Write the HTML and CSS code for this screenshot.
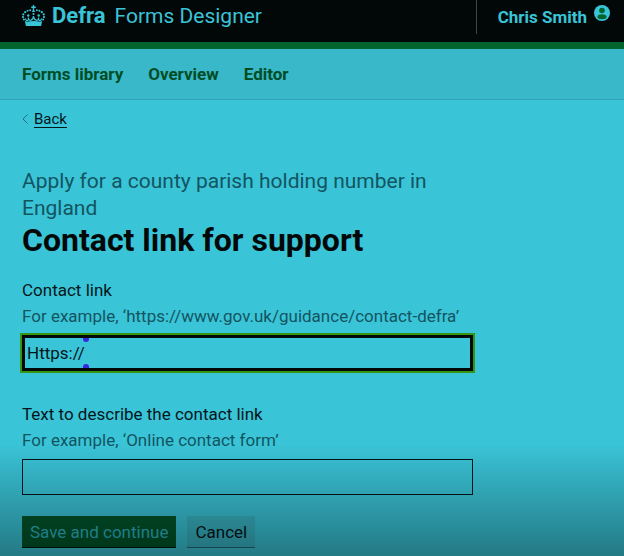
FILE: index.html
```html
<!DOCTYPE html>
<html lang="en">
<head>
<meta charset="utf-8">
<meta name="viewport" content="width=device-width, initial-scale=1">
<title>Contact link for support - Defra Forms Designer</title>
<link rel="stylesheet" href="styles.css">
</head>
<body>
<header class="header">
  <a class="brand" href="#">
    <svg class="crown" viewBox="0 0 23 24" aria-hidden="true">
      <path d="M10.800 3h1.400v1.600h1.600v1.500h-1.600v2.200l1 1.700h-3.400l1-1.700V6.100H9.200V4.600h1.600z"/>
      <circle cx="8.200" cy="8.300" r="1"/><circle cx="5.600" cy="8.800" r="1"/><circle cx="3.200" cy="10.200" r="1.100"/><circle cx="1.300" cy="12.400" r="1.100"/><circle cx="1" cy="15" r="1.100"/><circle cx="1.900" cy="17.400" r="1"/>
      <circle cx="14.800" cy="8.300" r="1"/><circle cx="17.400" cy="8.800" r="1"/><circle cx="19.800" cy="10.200" r="1.100"/><circle cx="21.700" cy="12.400" r="1.100"/><circle cx="22" cy="15" r="1.100"/><circle cx="21.100" cy="17.400" r="1"/>
      <circle cx="11.500" cy="12" r="1.100"/><circle cx="6.300" cy="13.500" r="1.200"/><circle cx="16.700" cy="13.500" r="1.200"/>
      <path class="crown-line" d="M3.300 16.500l1.300 2.200c1.600.2 2-1 1.700-3.200.3 2 1.200 3.200 2.700 2.700 1.400-.4 2.300-1.700 2.500-4.200.2 2.500 1.100 3.800 2.500 4.200 1.500.5 2.400-.7 2.700-2.700-.3 2.200.1 3.400 1.700 3.200l1.300-2.200"/>
      <path d="M2.800 18.800l1.800.9c4.600-.9 9.200-.9 13.800 0l1.800-.9-1.100 5.200H3.900z"/>
    </svg>
    <strong class="brand-org">Defra</strong>
    <span class="brand-product">Forms Designer</span>
  </a>
  <a class="account" href="#">
    <span>Chris Smith</span>
    <svg class="avatar" viewBox="0 0 16 16" aria-hidden="true">
      <circle class="avatar-disc" cx="8" cy="8" r="8"/>
      <circle class="avatar-person" cx="8" cy="5.500" r="2.800"/>
      <ellipse class="avatar-person" cx="8" cy="11.800" rx="4.600" ry="2.500"/>
    </svg>
  </a>
</header>
<nav class="nav" aria-label="Main">
  <a href="#">Forms library</a>
  <a href="#">Overview</a>
  <a href="#">Editor</a>
</nav>
<main class="main">
  <a class="back" href="#">
    <svg class="chevron" viewBox="0 0 6 10" aria-hidden="true"><path d="M5.500.5L1 5l4.500 4.500"/></svg>
    <span class="back-text">Back</span>
  </a>
  <form class="form">
    <h1 class="heading"><span class="caption">Apply for a county parish holding number in England</span>Contact link for support</h1>
    <div class="field">
      <label for="link">Contact link</label>
      <p class="hint" id="link-hint">For example, ‘https://www.gov.uk/guidance/contact-defra’</p>
      <div class="control">
        <input class="input input-active" id="link" type="text" value="Https://" aria-describedby="link-hint">
        <span class="caret" aria-hidden="true"></span>
      </div>
    </div>
    <div class="field">
      <label for="text">Text to describe the contact link</label>
      <p class="hint" id="text-hint">For example, ‘Online contact form’</p>
      <div class="control">
        <input class="input" id="text" type="text" aria-describedby="text-hint">
      </div>
    </div>
    <div class="actions">
      <button class="button button-primary" type="submit">Save and continue</button>
      <button class="button button-secondary" type="button">Cancel</button>
    </div>
  </form>
</main>
</body>
</html>
```
FILE: styles.css
```css
* { box-sizing: border-box; }

body {
  position: relative;
  min-height: 100vh;
  margin: 0;
  background: #3ac4d7;
  color: #04161a;
  font: 17px/26px Roboto, "Liberation Sans", sans-serif;
}

/* Shade rising from the bottom of the window */
body::after {
  content: "";
  position: fixed;
  inset: auto 0 0;
  height: 112px;
  background: linear-gradient(rgba(0, 0, 0, 0), rgba(0, 0, 0, 0.38));
  pointer-events: none;
}

a { color: inherit; text-decoration: none; }

.header {
  display: flex;
  justify-content: space-between;
  height: 49px;
  padding: 0 14px 0 22px;
  border-bottom: 7px solid #00642f;
  background: #020808;
  color: #3ac4d7;
}

.brand {
  display: flex;
  align-items: center;
  height: 32px;
  font-size: 21px;
}

.crown { width: 23px; height: 24px; margin: 0 7px 4px 0; fill: currentColor; }
.crown-line { fill: none; stroke: currentColor; stroke-width: 1.2; }
.brand-org { margin-right: 9px; font-size: 22px; }

.account {
  display: flex;
  align-items: center;
  gap: 7px;
  height: 34px;
  padding-left: 21px;
  border-left: 1px solid #3b4849;
  font-weight: 700;
}

.avatar { width: 16px; height: 16px; margin-bottom: 8px; }
.avatar-disc { fill: #3ac4d7; }
.avatar-person { fill: #00642f; }

.nav {
  display: flex;
  align-items: center;
  gap: 25px;
  height: 51px;
  padding: 0 22px;
  border-bottom: 1px solid #32a3b2;
  background: #39b8c9;
  color: #004d25;
  font-weight: 700;
}

.main { padding: 9px 22px 0; }

.back {
  display: flex;
  align-items: center;
  gap: 6px;
  width: fit-content;
  font-size: 15px;
  line-height: 20px;
}

.chevron { width: 6px; height: 10px; fill: none; stroke: #217380; }
.back-text { text-decoration: underline; text-underline-offset: 3px; }

.form { max-width: 451px; margin-top: 39px; }

.heading { margin: 0 0 19px; color: #020808; font-size: 32px; line-height: 36px; }

.caption {
  display: block;
  color: #135461;
  font-size: 21px;
  font-weight: 400;
  line-height: 27px;
}

.field { margin-bottom: 30px; }
.field label { display: block; }
.hint { margin: 0 0 6px; color: #135461; }
.control { position: relative; }

.input {
  display: block;
  width: 100%;
  height: 36px;
  padding: 0 4px;
  border: 1px solid #04161a;
  border-radius: 0;
  outline: 0;
  background: transparent;
  color: inherit;
  font: inherit;
}

.input-active {
  padding: 0 2px;
  border: 3px solid #020808;
  outline: 2px solid #369611;
}

/* Selection handles above and below the insertion point */
.caret::before,
.caret::after {
  content: "";
  position: absolute;
  left: 61px;
  width: 6px;
  height: 4px;
  background: #3a25dc;
}

.caret::before { top: 3px; border-radius: 0 0 3px 3px; }
.caret::after { bottom: 3px; border-radius: 3px 3px 0 0; }

.actions { display: flex; gap: 11px; margin-top: -9px; }

.button {
  height: 32px;
  padding: 0 8px;
  border: 0;
  font: inherit;
}

.button-primary { background: #00562b; color: #2fb4c2; box-shadow: inset 0 -1px #001a0d; }
.button-secondary { background: #39b4c3; color: #04161a; box-shadow: inset 0 -1px #1e6f7c; }
```
